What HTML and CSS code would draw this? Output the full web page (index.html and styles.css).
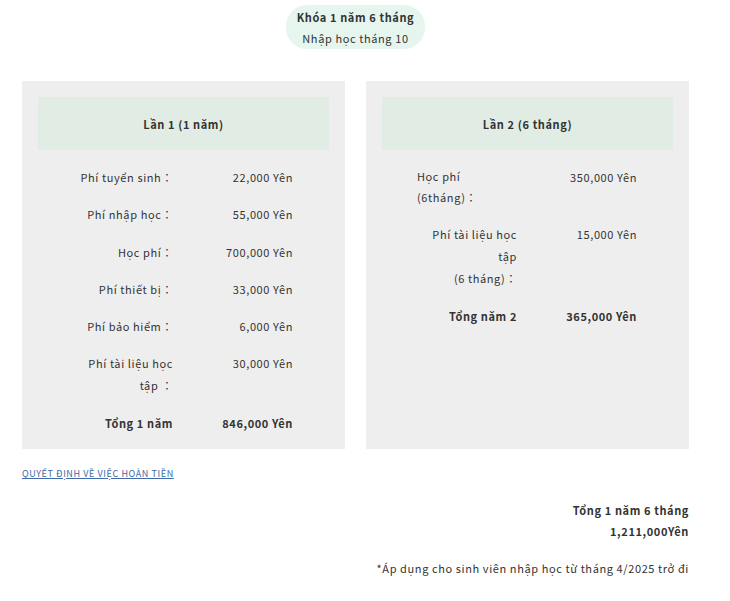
FILE: index.html
```html
<!DOCTYPE html>
<html lang="vi">
<head>
<meta charset="utf-8">
<title>Học phí</title>
<link rel="stylesheet" href="styles.css">
</head>
<body>
<div class="page">
  <div class="pill-wrap">
    <div class="pill">
      <div class="pill-title">Khóa 1 năm 6 tháng</div>
      <div class="pill-sub">Nhập học tháng 10</div>
    </div>
  </div>

  <div class="cards">
    <div class="card">
      <div class="card-head">Lần 1 (1 năm)</div>
      <div class="rows">
        <div class="row"><div class="lbl">Phí tuyển sinh：</div><div class="val">22,000 Yên</div></div>
        <div class="row"><div class="lbl">Phí nhập học：</div><div class="val">55,000 Yên</div></div>
        <div class="row"><div class="lbl">Học phí：</div><div class="val">700,000 Yên</div></div>
        <div class="row"><div class="lbl">Phí thiết bị：</div><div class="val">33,000 Yên</div></div>
        <div class="row"><div class="lbl">Phí bảo hiểm：</div><div class="val">6,000 Yên</div></div>
        <div class="row"><div class="lbl">Phí tài liệu học tập ：</div><div class="val">30,000 Yên</div></div>
        <div class="row total"><div class="lbl">Tổng 1 năm</div><div class="val">846,000 Yên</div></div>
      </div>
    </div>

    <div class="card">
      <div class="card-head">Lần 2 (6 tháng)</div>
      <div class="rows">
        <div class="row"><div class="lbl left">Học phí<br>(6tháng)：</div><div class="val">350,000 Yên</div></div>
        <div class="row"><div class="lbl">Phí tài liệu học tập<br>(6 tháng)：</div><div class="val">15,000 Yên</div></div>
        <div class="row total"><div class="lbl">Tổng năm 2</div><div class="val">365,000 Yên</div></div>
      </div>
    </div>
  </div>

  <a class="refund" href="#">QUYẾT ĐỊNH VỀ VIỆC HOÀN TIỀN</a>

  <div class="summary">
    <div class="sum-line">Tổng 1 năm 6 tháng</div>
    <div class="sum-line">1,211,000Yên</div>
  </div>

  <p class="note">*Áp dụng cho sinh viên nhập học từ tháng 4/2025 trở đi</p>
</div>
</body>
</html>
```

FILE: styles.css
```css
html, body {
  margin: 0;
  padding: 0;
  background: #ffffff;
}

body {
  font-family: "Noto Sans CJK JP", "Open Sans", sans-serif;
  font-size: 11px;
  color: #333333;
  letter-spacing: 0.6px;
}

.page {
  width: 667px;
  margin-left: 22px;
  padding-top: 5px;
}

.pill-wrap {
  display: flex;
  justify-content: center;
}

.pill {
  background: #e6f6ef;
  border-radius: 21px;
  padding: 2px 11px 0;
  text-align: center;
  line-height: 21px;
}

.pill-title {
  font-weight: 700;
}

.cards {
  display: flex;
  gap: 21px;
  margin-top: 32px;
}

.card {
  flex: 1;
  background: #eeeeee;
  padding: 16px 16px 7px;
}

.card-head {
  background: #e1ece4;
  height: 53px;
  display: flex;
  align-items: center;
  justify-content: center;
  font-weight: 700;
}

.rows {
  margin-top: 9px;
  padding-left: 35px;
}

.row {
  display: grid;
  grid-template-columns: 100px 120px;
  padding: 7px 0 8px;
  line-height: 22px;
}

.row + .row {
  padding-top: 7.3px;
}

.row.total {
  padding-top: 8px;
}

.lbl {
  text-align: right;
}

.lbl.left {
  text-align: left;
  line-height: 21px;
}

.val {
  text-align: right;
}

.total {
  font-weight: 700;
}

.refund {
  display: inline-block;
  margin-top: 18px;
  font-size: 9px;
  color: #4069a8;
  text-decoration: underline;
  letter-spacing: 0.6px;
}

.summary {
  margin-top: 20px;
  text-align: right;
  font-weight: 700;
  line-height: 21px;
}

.note {
  margin: 15px 0 0;
  text-align: right;
  line-height: 22px;
}
```
